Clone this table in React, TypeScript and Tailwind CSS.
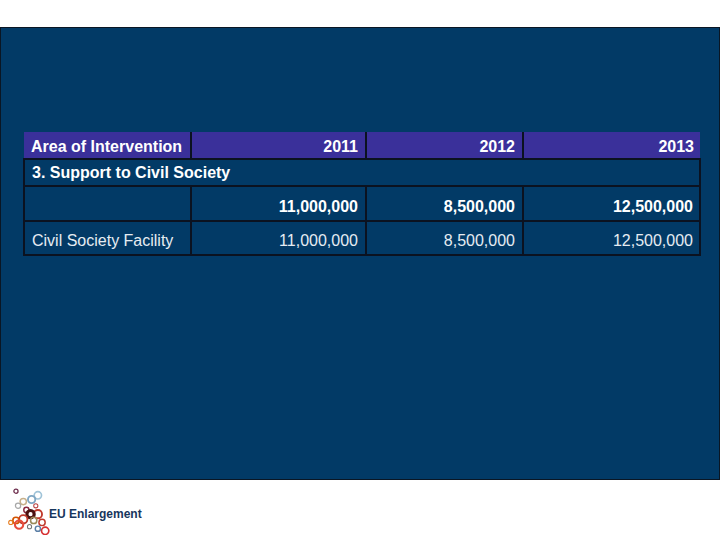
import React from "react";

const font = { fontFamily: '"Liberation Sans", Arial, sans-serif' };

function Logo() {
    const dots: [number, number, number, string, number][] = [
        [9, 6, 2, "#6b2a4a", 1.2],
        [30, 10, 3.5, "#9fc3d8", 1.6],
        [24, 14, 3.5, "#7fa7c4", 1.8],
        [16, 16, 3, "#c7b08a", 1.4],
        [11, 20, 2.5, "#a8a8a8", 1.2],
        [19, 24, 2.5, "#8a2840", 1.4],
        [28, 20, 2, "#b44", 1],
        [30, 28, 4, "#c0392b", 1.8],
        [23, 28, 3.5, "#4a1010", 3],
        [16, 33, 4, "#c0392b", 1.8],
        [26, 34, 3, "#9a8a5a", 1.5],
        [34, 36, 3, "#c0392b", 1.4],
        [9, 34, 3, "#d35400", 1.6],
        [12, 38, 4, "#e74c3c", 2],
        [22, 40, 2, "#777", 1],
        [30, 42, 2.5, "#5b7fa6", 1.4],
        [37, 44, 3.5, "#d63031", 1.6],
        [4, 36, 2, "#e67e22", 1],
    ];
    return (
        <svg width="54" height="48" viewBox="1 2 41 46">
            {dots.map(([cx, cy, r, c, w], i) => (
                <circle key={i} cx={cx} cy={cy} r={r} fill="none" stroke={c} strokeWidth={w} />
            ))}
        </svg>
    );
}

export default function App() {
    return (
        <div className="w-[720px] h-[540px] bg-white flex flex-col" style={font}>
            <div className="h-[27px]" />
            <div className="h-[453px] bg-[#023a66] border border-[#0a1624] pt-[104px] pl-[22px]">
                <table className="border-collapse text-[16px] leading-none text-white">
                    <colgroup>
                        <col className="w-[167px]" />
                        <col className="w-[175px]" />
                        <col className="w-[157px]" />
                        <col className="w-[177px]" />
                    </colgroup>
                    <tbody>
                        <tr className="h-[27px] bg-[#3a309a] font-bold">
                            <td className="pl-[7px] pt-[3px] border-r-2 border-b-2 border-[#0b1220]">Area of Intervention</td>
                            <td className="text-right pr-[7px] pt-[3px] border-r-2 border-b-2 border-[#0b1220]">2011</td>
                            <td className="text-right pr-[7px] pt-[3px] border-r-2 border-b-2 border-[#0b1220]">2012</td>
                            <td className="text-right pr-[6px] pt-[3px] border-b-2 border-[#0b1220]">2013</td>
                        </tr>
                        <tr className="h-[27px] font-bold">
                            <td colSpan={4} className="pl-[7px] border-2 border-[#0b1220]">3. Support to Civil Society</td>
                        </tr>
                        <tr className="h-[35px] font-bold">
                            <td className="border-2 border-[#0b1220]" />
                            <td className="text-right pr-[7px] pt-[6px] border-2 border-[#0b1220]">11,000,000</td>
                            <td className="text-right pr-[7px] pt-[6px] border-2 border-[#0b1220]">8,500,000</td>
                            <td className="text-right pr-[6px] pt-[6px] border-2 border-[#0b1220]">12,500,000</td>
                        </tr>
                        <tr className="h-[34px] text-[#e6ecf2]">
                            <td className="pl-[7px] pt-[6px] border-2 border-[#0b1220]">Civil Society Facility</td>
                            <td className="text-right pr-[7px] pt-[6px] border-2 border-[#0b1220]">11,000,000</td>
                            <td className="text-right pr-[7px] pt-[6px] border-2 border-[#0b1220]">8,500,000</td>
                            <td className="text-right pr-[6px] pt-[6px] border-2 border-[#0b1220]">12,500,000</td>
                        </tr>
                    </tbody>
                </table>
            </div>
            <div className="flex items-end pl-[2px] pt-[7px]">
                <Logo />
                <span className="text-[12px] font-bold text-[#17365d] mb-[12px] -ml-[7px]">EU Enlargement</span>
            </div>
        </div>
    );
}
